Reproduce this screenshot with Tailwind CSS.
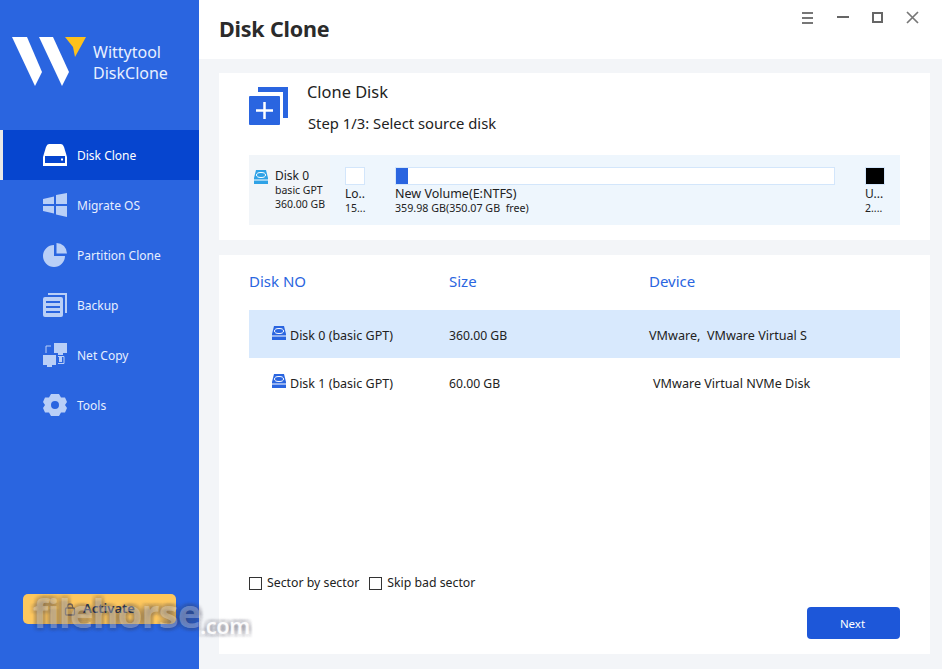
<!DOCTYPE html>
<html lang="en">
<head>
  <meta charset="UTF-8">
  <title>Wittytool DiskClone</title>
  <script src="https://cdn.jsdelivr.net/npm/@tailwindcss/browser@4"></script>
</head>
<body class="font-['Noto_Sans','Open_Sans',sans-serif]">
  <div class="relative flex w-[942px] h-[669px] overflow-hidden bg-[#f3f5f8] text-[#222]">
    <!-- sidebar -->
    <aside class="w-[199px] shrink-0 flex flex-col bg-[#2a65e0] text-[#e6eeff]">
      <div class="h-[130px] flex items-start pl-[12px] pt-[37px] gap-[6px]">
        <svg width="75" height="50" viewBox="0 0 75 50" class="shrink-0">
          <path d="M0 0H15L30 35L23 49Z" fill="#fff"/>
          <path d="M27 0H41L57 35L50 49Z" fill="#fff"/>
          <path d="M53 0H74L63 20L61 10Z" fill="#fdc11c"/>
        </svg>
        <div class="text-[16px] leading-[21px] pt-[5px] text-[#e8f0ff]">Wittytool<br>DiskClone</div>
      </div>
      <nav class="flex flex-col text-[12px]">
        <a class="h-[50px] flex items-center gap-[10px] pl-[40px] bg-[#0645cf] border-l-[3px] border-[#e8e8e8] text-white">
          <svg width="24" height="24" viewBox="0 0 24 24"><path d="M6 1H18Q20 1 21 4L24 14V23H0V14L3 4Q4 1 6 1Z" fill="#fff"/><rect x="2" y="13" width="20" height="7" fill="#0645cf"/><rect x="18" y="15.500" width="2" height="2" fill="#fff"/></svg>
          <span class="mt-[2px]">Disk Clone</span>
        </a>
        <a class="h-[50px] flex items-center gap-[10px] pl-[43px]">
          <svg width="24" height="24" viewBox="0 0 24 24" fill="#b9cff7"><path d="M0 6L11 3.500V11H0Z"/><path d="M13 2L24 0V11H13Z"/><path d="M0 13H11V20.500L0 18Z"/><path d="M13 13H24V24L13 21.500Z"/></svg>
          <span class="mt-[2px]">Migrate OS</span>
        </a>
        <a class="h-[50px] flex items-center gap-[10px] pl-[43px]">
          <svg width="24" height="24" viewBox="0 0 24 24" fill="#b9cff7"><path d="M11 2V13H22A11 11 0 1 1 11 2Z"/><path d="M13.500 0A10.500 10.500 0 0 1 24 10.500H13.500Z"/></svg>
          <span class="mt-[2px]">Partition Clone</span>
        </a>
        <a class="h-[50px] flex items-center gap-[10px] pl-[43px]">
          <svg width="24" height="24" viewBox="0 0 24 24"><path d="M5 0H24V20H22V2H5Z" fill="#b9cff7"/><rect y="4" width="20" height="20" rx="2" fill="#b9cff7"/><path d="M3 9H17M3 14H17M3 19H17" stroke="#2a65e0" stroke-width="2"/></svg>
          <span class="mt-[2px]">Backup</span>
        </a>
        <a class="h-[50px] flex items-center gap-[10px] pl-[43px]">
          <svg width="24" height="24" viewBox="0 0 24 24" fill="#b9cff7"><rect x="11" y="0" width="13" height="10"/><rect x="15" y="10" width="5" height="2"/><rect x="0" y="12" width="13" height="10"/><rect x="4" y="22" width="5" height="2"/><path d="M8 3H3V10" fill="none" stroke="#b9cff7"/><path d="M15 13.500H21V20.500H15" fill="none" stroke="#b9cff7"/><rect x="16" y="14" width="3" height="5"/></svg>
          <span class="mt-[2px]">Net Copy</span>
        </a>
        <a class="h-[50px] flex items-center gap-[10px] pl-[43px]">
          <svg width="24" height="24" viewBox="0 0 24 24" fill="#b9cff7"><path fill-rule="evenodd" d="M8 1H16L18 4.500L22 4.500L24 9L22 12L24 15L22 19.500L18 19.500L16 23H8L6 19.500L2 19.500L0 15L2 12L0 9L2 4.500L6 4.500ZM12 8A4 4 0 1 0 12 16A4 4 0 1 0 12 8Z"/></svg>
          <span class="mt-[2px]">Tools</span>
        </a>
      </nav>
      <div class="mt-auto mb-[45px] mx-[23px] h-[30px] w-[153px] rounded-[5px] bg-[#fdc75e] flex items-center justify-center gap-[7px] text-[13px] font-semibold text-[#2b3550]">
        <svg width="12" height="13" viewBox="0 0 12 13" fill="none" stroke="#7b6a55" stroke-width="1.300"><rect x="1.500" y="5" width="9" height="7" rx="1"/><path d="M3.500 5V3.500A2.500 2.500 0 0 1 8.500 3.500V5"/></svg>
        <span>Activate</span>
      </div>
    </aside>

    <!-- main -->
    <main class="flex-1 flex flex-col">
      <header class="h-[59px] bg-white flex items-center justify-between pl-[20px] pr-[21px] shrink-0">
        <h1 class="text-[21.500px] font-bold text-[#2b2b2b] leading-none -mt-[1px] tracking-[-0.2px]">Disk Clone</h1>
        <div class="flex items-center gap-[19px] -mt-[23px] text-[#666]">
          <svg width="16" height="14" viewBox="0 0 16 14" stroke="#777" stroke-width="2"><path d="M2 2H13M2 7H13M2 12H13"/></svg>
          <svg width="16" height="14" viewBox="0 0 16 14" stroke="#666" stroke-width="2"><path d="M2 6H14"/></svg>
          <svg width="16" height="14" viewBox="0 0 16 14" fill="none" stroke="#666" stroke-width="2"><rect x="3" y="2" width="9" height="9"/></svg>
          <svg width="16" height="14" viewBox="0 0 16 14" fill="none" stroke="#777" stroke-width="1.700"><path d="M2 1L13 12M13 1L2 12"/></svg>
        </div>
      </header>

      <section class="mt-[14px] ml-[20px] w-[711px] h-[167px] bg-white pl-[30px] pr-[30px] pt-[13px] shrink-0">
        <div class="flex h-[69px]">
          <svg width="40" height="40" viewBox="0 0 40 40" class="shrink-0">
            <path d="M9 1H39V32H34V6H9Z" fill="#2a65e0"/>
            <rect x="0" y="10" width="31" height="29" rx="1" fill="#2a65e0"/>
            <path d="M15.500 16V33M7 24.500H24" stroke="#fff" stroke-width="2.500"/>
          </svg>
          <div class="ml-[18px]">
            <div class="text-[16.400px] leading-[22px] -mt-[5px]">Clone Disk</div>
            <div class="text-[14.800px] leading-[20px] mt-[10px] ml-px">Step 1/3: Select source disk</div>
          </div>
        </div>
        <div class="h-[70px] w-[651px] bg-[#eef6fd] flex text-[10.500px] leading-[13px]">
          <div class="w-[81px] bg-[#f1f5f9] flex shrink-0 pl-[4px] pt-[13px]">
            <svg width="16" height="16" viewBox="0 0 16 16" class="shrink-0 mt-px"><path d="M3 1H13L15 9V15H1V9Z" fill="#2fa2e6"/><ellipse cx="8" cy="6" rx="4.500" ry="2.500" fill="none" stroke="#fff"/><path d="M1 11H15" stroke="#fff"/></svg>
            <div class="ml-[6px]">
              <div class="text-[12px] leading-[15px]">Disk 0</div>
              <div class="mt-px">basic GPT</div>
              <div class="mt-[1px]">360.00 GB</div>
            </div>
          </div>
          <div class="w-[50px] pl-[15px] pt-[12px] shrink-0">
            <div class="w-[20px] h-[18px] bg-white border border-[#d3e6fb]"></div>
            <div class="text-[12px] leading-[15px] mt-[1px]">Lo..</div>
            <div class="mt-[1px]">15...</div>
          </div>
          <div class="w-[440px] ml-[15px] pt-[12px] shrink-0">
            <div class="h-[18px] bg-white border border-[#d3e6fb]"><div class="w-[12px] h-full bg-[#2a65e0]"></div></div>
            <div class="text-[12.500px] leading-[15px] mt-[1px]">New Volume(E:NTFS)</div>
            <div class="text-[10.700px] mt-[1px]">359.98 GB(350.07 GB&nbsp; free)</div>
          </div>
          <div class="ml-[30px] pt-[12px]">
            <div class="w-[20px] h-[18px] bg-black border border-[#d3e6fb]"></div>
            <div class="text-[12px] leading-[15px] mt-[1px]">U...</div>
            <div class="mt-[1px]">2....</div>
          </div>
        </div>
      </section>

      <section class="mt-[15px] ml-[20px] w-[711px] h-[399px] bg-white pl-[30px] pr-[30px] flex flex-col shrink-0">
        <div class="h-[55px] flex items-end pb-[19px] text-[15px] text-[#2a65e0]">
          <div class="w-[200px] leading-[20px]">Disk NO</div>
          <div class="w-[200px] leading-[20px]">Size</div>
          <div class="leading-[20px]">Device</div>
        </div>
        <div class="h-[48px] bg-[#d8e9fd] flex items-center text-[12.500px] pt-[4px]">
          <div class="w-[200px] flex items-center pl-[22px] gap-[3px]">
            <svg width="16" height="16" viewBox="0 0 16 16" class="shrink-0 -mt-[6px]"><path d="M3 1H13L15 9V15H1V9Z" fill="#2a65e0"/><ellipse cx="8" cy="6" rx="4.500" ry="2.500" fill="none" stroke="#fff"/><path d="M1 11H15" stroke="#fff"/></svg>
            <span>Disk 0 (basic GPT)</span>
          </div>
          <div class="w-[200px] text-[12.200px]">360.00 GB</div>
          <div class="text-[12.600px]">VMware,&nbsp; VMware Virtual S</div>
        </div>
        <div class="h-[48px] flex items-center text-[12.500px] pt-[4px]">
          <div class="w-[200px] flex items-center pl-[22px] gap-[3px]">
            <svg width="16" height="16" viewBox="0 0 16 16" class="shrink-0 -mt-[6px]"><path d="M3 1H13L15 9V15H1V9Z" fill="#2a65e0"/><ellipse cx="8" cy="6" rx="4.500" ry="2.500" fill="none" stroke="#fff"/><path d="M1 11H15" stroke="#fff"/></svg>
            <span>Disk 1 (basic GPT)</span>
          </div>
          <div class="w-[200px] text-[12.200px]">60.00 GB</div>
          <div class="pl-[4px] text-[12.600px]">VMware Virtual NVMe Disk</div>
        </div>
        <div class="mt-auto flex items-center text-[12.300px] h-[20px] mb-[61px]">
          <span class="w-[13px] h-[13px] border border-[#333] mr-[5px]"></span>
          <span class="mr-[10px]">Sector by sector</span>
          <span class="w-[13px] h-[13px] border border-[#333] mr-[5px]"></span>
          <span>Skip bad sector</span>
        </div>
        <div class="absolute left-[807px] top-[607px] w-[93px] h-[32px] rounded-[4px] bg-[#1d57d9] text-white text-[11.500px] flex items-center justify-center pt-[2px] pr-[2px]">Next</div>
      </section>
    </main>

    <!-- watermark -->
    <div class="absolute left-[33px] top-[590px] flex items-baseline pointer-events-none font-['Open_Sans',sans-serif] font-bold text-white/30 [text-shadow:3px_0_2px_rgba(60,60,80,0.1),-3px_0_2px_rgba(60,60,80,0.1),0_3px_2px_rgba(60,60,80,0.1),0_-3px_2px_rgba(60,60,80,0.1),3px_3px_2px_rgba(60,60,80,0.1),-3px_3px_2px_rgba(60,60,80,0.1),3px_-3px_2px_rgba(60,60,80,0.1),-3px_-3px_2px_rgba(60,60,80,0.1)]">
      <span class="text-[40px] leading-[46px] tracking-[-1px]">filehorse</span><span class="text-[22px] leading-[46px] font-semibold relative top-[6px] text-white/90 tracking-[-0.5px]">.com</span>
    </div>
  </div>
</body>
</html>
